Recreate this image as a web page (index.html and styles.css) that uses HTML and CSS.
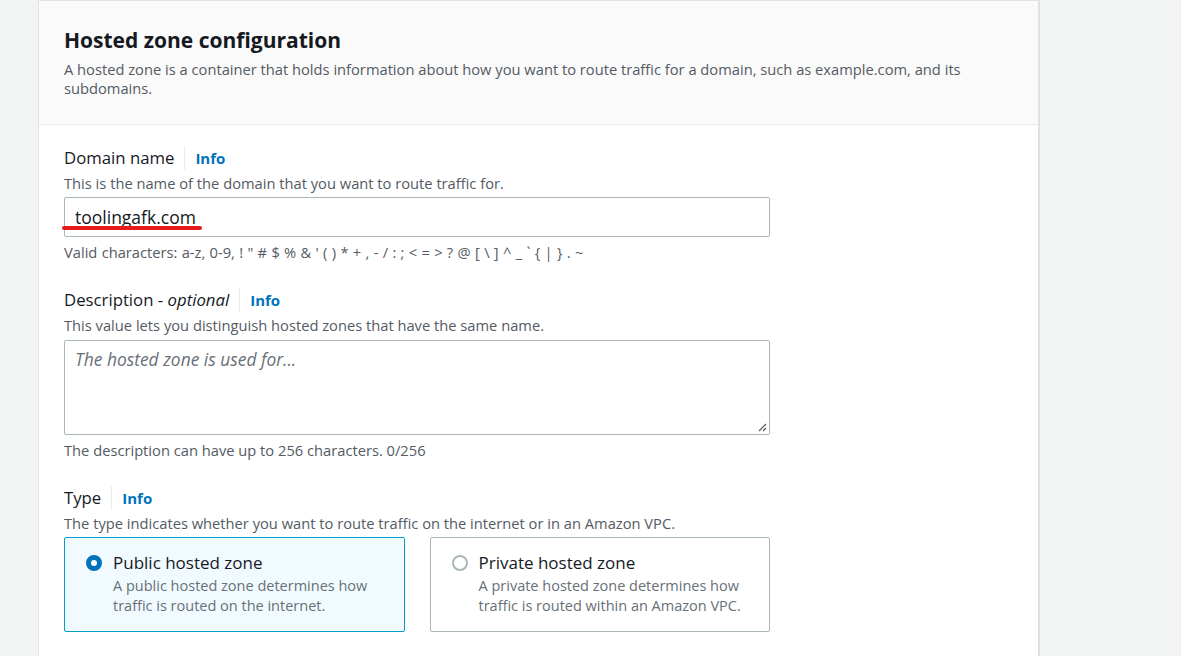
FILE: index.html
```html
<!DOCTYPE html>
<html lang="en">
<head>
<meta charset="utf-8">
<title>Hosted zone configuration</title>
<link rel="stylesheet" href="styles.css">
</head>
<body>
<div class="page">
  <section class="card">
    <header class="card-header">
      <h2 class="card-title">Hosted zone configuration</h2>
      <p class="card-desc">A hosted zone is a container that holds information about how you want to route traffic for a domain, such as example.com, and its subdomains.</p>
    </header>
    <div class="card-body">
      <div class="field">
        <div class="label-row"><span class="label">Domain name</span><span class="info">Info</span></div>
        <div class="help">This is the name of the domain that you want to route traffic for.</div>
        <div class="input-wrap">
          <div class="input">toolingafk.com</div>
          <span class="annot"></span>
        </div>
        <div class="constraint chars">Valid characters: a-z, 0-9, ! " # $ % &amp; ' ( ) * + , - / : ; &lt; = &gt; ? @ [ \ ] ^ _ ` { | } . ~</div>
      </div>
      <div class="field">
        <div class="label-row"><span class="label">Description - <i>optional</i></span><span class="info">Info</span></div>
        <div class="help">This value lets you distinguish hosted zones that have the same name.</div>
        <div class="textarea">
          <span class="placeholder">The hosted zone is used for...</span>
          <svg class="grip" width="9" height="9" viewBox="0 0 9 9"><path d="M8 1 L1 8 M8 5 L5 8" stroke="#555" stroke-width="1.2" fill="none"/></svg>
        </div>
        <div class="constraint">The description can have up to 256 characters. 0/256</div>
      </div>
      <div class="field">
        <div class="label-row"><span class="label">Type</span><span class="info">Info</span></div>
        <div class="help">The type indicates whether you want to route traffic on the internet or in an Amazon VPC.</div>
        <div class="tiles">
          <div class="tile selected">
            <span class="radio on"></span>
            <div class="tile-text">
              <div class="tile-title">Public hosted zone</div>
              <div class="tile-desc">A public hosted zone determines how traffic is routed on the internet.</div>
            </div>
          </div>
          <div class="tile">
            <span class="radio"></span>
            <div class="tile-text">
              <div class="tile-title">Private hosted zone</div>
              <div class="tile-desc">A private hosted zone determines how traffic is routed within an Amazon VPC.</div>
            </div>
          </div>
        </div>
      </div>
    </div>
  </section>
</div>
</body>
</html>
```
FILE: styles.css
```css
* { box-sizing: border-box; }
html, body { margin: 0; padding: 0; }
body {
  background: #f2f3f3;
  font-family: "Open Sans", "Noto Sans", sans-serif;
  color: #16191f;
  font-size: 14.7px;
  overflow: hidden;
}
.page {
  padding: 0 0 0 38px;
}
.card {
  width: 1002px;
  background: #fff;
  border: 1px solid #e1e4e4;
  border-right: 2px solid #dfe2e2;
  border-bottom: none;
  min-height: 670px;
}
.card-header {
  background: #fafafa;
  border-bottom: 1px solid #eaeded;
  padding: 26px 25px 25px;
  height: 124px;
}
.card-title {
  margin: 0;
  font-size: 21px;
  line-height: 26px;
  font-weight: 700;
  color: #16191f;
}
.card-desc {
  margin: 7px 0 0;
  font-size: 14.7px;
  line-height: 19px;
  color: #545b64;
  max-width: 920px;
}
.card-body {
  padding: 21px 25px 0;
  display: flex;
  flex-direction: column;
  gap: 26px;
}
.field { display: flex; flex-direction: column; }
.label-row {
  display: flex;
  align-items: center;
  height: 24px;
}
.label {
  font-size: 16.75px;
  color: #16191f;
  padding-right: 10px;
  border-right: 1px solid #eaeded;
  line-height: 24px;
}
.label i { font-style: italic; }
.info {
  font-size: 15px;
  font-weight: 700;
  color: #0073bb;
  padding-left: 10px;
}
.help {
  font-size: 14.7px;
  line-height: 20px;
  color: #545b64;
  margin-top: 3px;
}
.input-wrap {
  position: relative;
  margin-top: 4px;
  width: 706px;
}
.input {
  height: 40px;
  border: 1px solid #aab7b8;
  border-radius: 2px;
  padding: 0 10px;
  font-size: 17.5px;
  line-height: 38px;
  color: #16191f;
  background: #fff;
}
.annot {
  position: absolute;
  left: -2px;
  top: 29px;
  width: 140px;
  height: 4px;
  border-radius: 2px;
  background: #e41b1b;
}
.constraint {
  font-size: 14.7px;
  line-height: 20px;
  color: #545b64;
  margin-top: 5px;
}
.constraint.chars { word-spacing: 0.5px; }
.textarea {
  position: relative;
  margin-top: 5px;
  width: 706px;
  height: 95px;
  border: 1px solid #aab7b8;
  border-radius: 2px;
  padding: 5px 10px;
  font-size: 17.4px;
  line-height: 26px;
}
.placeholder { color: #687078; font-style: italic; }
.grip {
  position: absolute;
  right: 2px;
  bottom: 2px;
}
.tiles {
  margin-top: 4px;
  display: flex;
  gap: 25px;
  width: 706px;
}
.tile {
  flex: 1;
  height: 95px;
  border: 1px solid #aab7b8;
  border-radius: 2px;
  padding: 13px 20px 0;
  display: flex;
  gap: 11px;
  background: #fff;
}
.tile.selected {
  background: #f1faff;
  border-color: #00a1c9;
}
.radio {
  flex: none;
  width: 16px;
  height: 16px;
  border-radius: 50%;
  border: 2px solid #aab7b8;
  margin-top: 4px;
  margin-left: 1px;
  background: #fff;
}
.radio.on {
  border: 5px solid #0073bb;
}
.tile-title {
  font-size: 17px;
  line-height: 24px;
  color: #16191f;
}
.tile-desc {
  font-size: 14.5px;
  line-height: 20px;
  color: #687078;
  margin-top: 1px;
}
```
